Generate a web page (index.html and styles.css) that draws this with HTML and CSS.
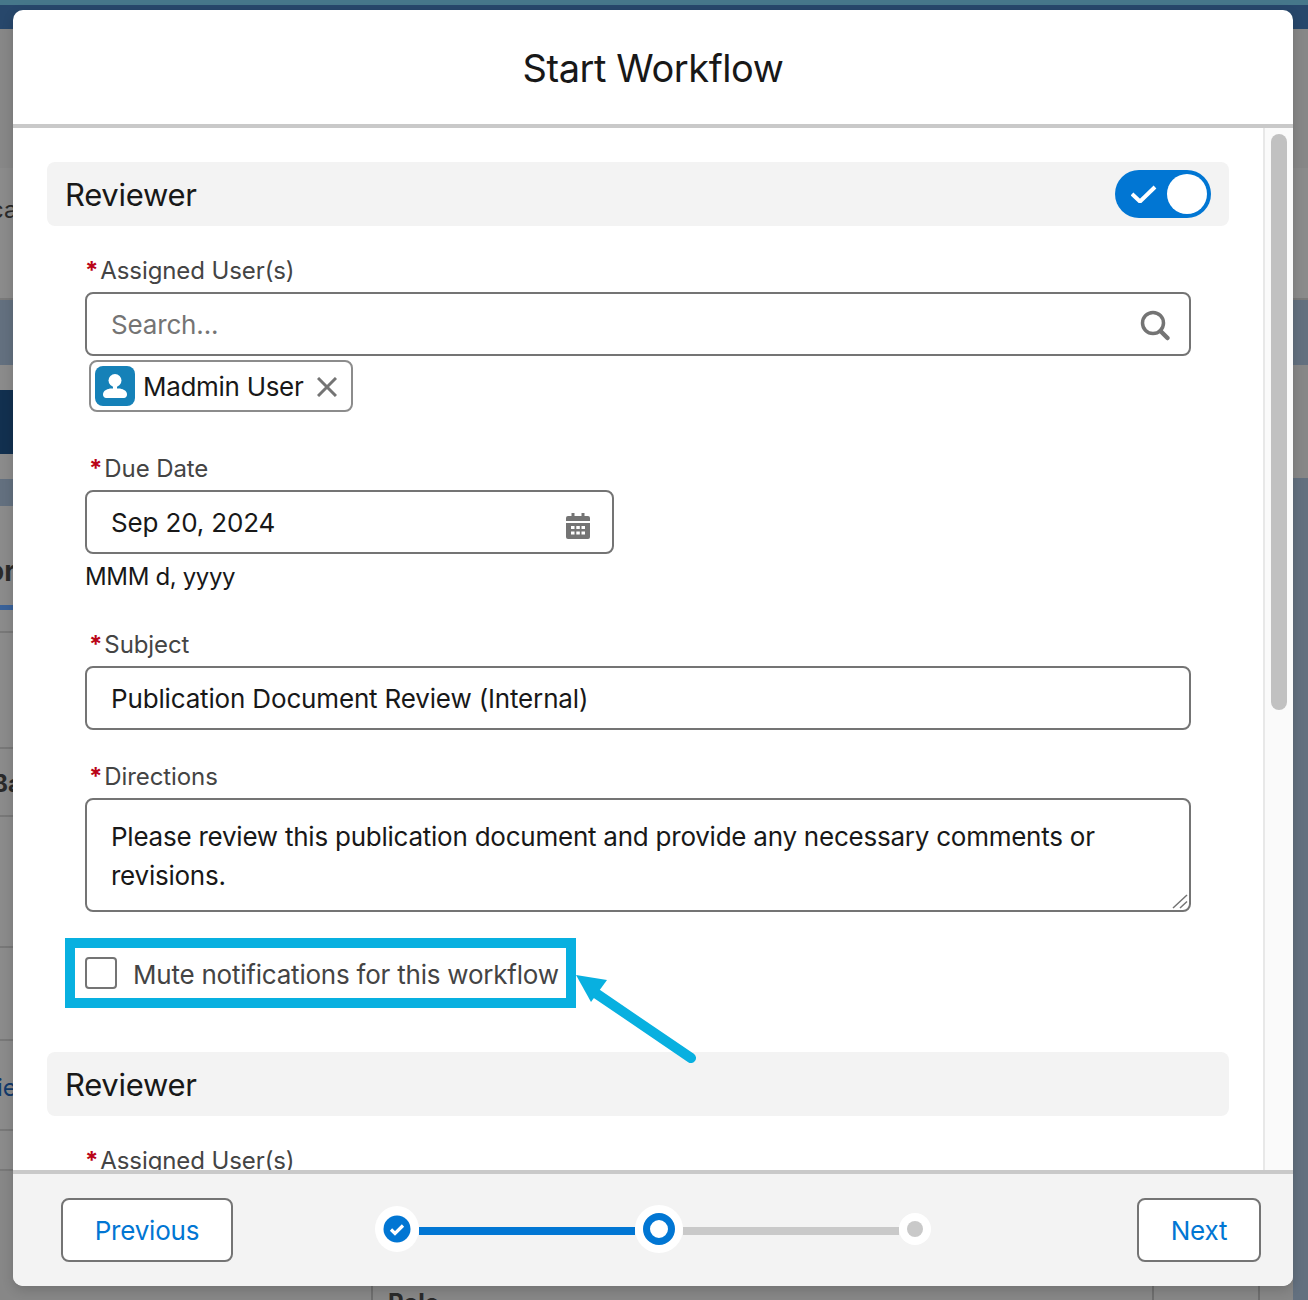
FILE: index.html
```html
<!DOCTYPE html>
<html lang="en">
<head>
  <meta charset="UTF-8">
  <title>Start Workflow</title>
  <link rel="stylesheet" href="styles.css">
</head>
<body>
  <div class="backdrop">
    <div class="band band-teal"></div>
    <div class="band band-navy"></div>
    <div class="band band-grey-a"></div>
    <div class="band band-grey-b"><span class="frag frag-ca">ca</span></div>
    <div class="band band-slate"></div>
    <div class="band band-gap"></div>
    <div class="band band-dark"></div>
    <div class="band band-gap"></div>
    <div class="band band-slate2"></div>
    <div class="band band-or"><span class="frag frag-or">or</span></div>
    <div class="band band-tab"></div>
    <div class="band band-row r1"></div>
    <div class="band band-row r2"></div>
    <div class="band band-row r3"><span class="frag frag-ba">Ba</span></div>
    <div class="band band-row r4"></div>
    <div class="band band-row r5"></div>
    <div class="band band-row r6"><span class="frag frag-ie">ie</span></div>
    <div class="band band-row r7"></div>
    <div class="band-foot">
      <div class="foot-cell cell-first"></div>
      <div class="foot-cell cell-role">Role</div>
      <div class="foot-cell cell-third"></div>
      <div class="foot-cell cell-last"></div>
    </div>
  </div>
  <div class="backdrop-right">
    <div class="right-slate"></div>
    <div class="right-grey"></div>
    <div class="right-rest"></div>
  </div>

  <div class="modal">
    <header class="modal-head">
      <h1>Start Workflow</h1>
    </header>

    <div class="modal-body">
      <div class="content">
        <div class="section-head">
          <h2>Reviewer</h2>
          <div class="toggle">
            <svg class="toggle-check" width="26" height="18" viewBox="0 0 26 18"><path d="M1 9l8 7.500L24 2" fill="none" stroke="#fff" stroke-width="4"/></svg>
            <span class="toggle-knob"></span>
          </div>
        </div>

        <div class="fields">
          <label class="field-label"><span class="req">*</span>Assigned User(s)</label>
          <div class="input-wrap">
            <input class="text-input" type="text" placeholder="Search...">
            <svg class="input-icon icon-search" width="32" height="32" viewBox="0 0 32 32"><circle cx="14" cy="13" r="10.500" fill="none" stroke="#747474" stroke-width="3.500"/><path d="M21.500 21l7 7" stroke="#747474" stroke-width="4.500" stroke-linecap="round"/></svg>
          </div>
          <div class="pill">
            <span class="avatar">
              <svg width="40" height="40" viewBox="0 0 40 40"><circle cx="20" cy="14.500" r="6.500" fill="#fff" /><rect x="18" y="16" width="4" height="8" fill="#fff"/><path d="M8 28.500c0-3.500 3-5 7-6h10c4 1 7 2.500 7 6 0 2-1.500 3.500-3 3.500H11c-1.500 0-3-1.500-3-3.500z" fill="#fff"/></svg>
            </span>
            <span class="pill-name">Madmin User</span>
            <svg class="pill-x" width="20" height="20" viewBox="0 0 20 20"><path d="M1 1l18 18M19 1L1 19" stroke="#747474" stroke-width="3"/></svg>
          </div>

          <label class="field-label label-inset label-date"><span class="req">*</span>Due Date</label>
          <div class="input-wrap date-wrap">
            <input class="text-input" type="text" value="Sep 20, 2024">
            <svg class="input-icon icon-cal" width="24" height="26" viewBox="0 0 24 26">
              <path d="M0 5a2 2 0 0 1 2-2h3.500V0h3v3h7V0h3v3H22a2 2 0 0 1 2 2v3H0z" fill="#747474"/>
              <path d="M0 10h24v14a2 2 0 0 1-2 2H2a2 2 0 0 1-2-2z" fill="#747474"/>
              <g fill="#fff"><rect x="5" y="13" width="3.500" height="3"/><rect x="10.300" y="13" width="3.500" height="3"/><rect x="15.500" y="13" width="3.500" height="3"/><rect x="5" y="18.500" width="3.500" height="3"/><rect x="10.300" y="18.500" width="3.500" height="3"/><rect x="15.500" y="18.500" width="3.500" height="3"/></g>
            </svg>
          </div>
          <div class="date-hint">MMM d, yyyy</div>

          <label class="field-label label-inset label-subject"><span class="req">*</span>Subject</label>
          <input class="text-input" type="text" value="Publication Document Review (Internal)">

          <label class="field-label label-inset label-dir"><span class="req">*</span>Directions</label>
          <div class="input-wrap">
            <textarea class="text-area">Please review this publication document and provide any necessary comments or revisions.</textarea>
            <svg class="input-icon icon-grip" width="16" height="15" viewBox="0 0 16 15"><path d="M1 14L15 1M8 14l7-6.500" stroke="#747474" stroke-width="1.500" fill="none"/></svg>
          </div>
        </div>

        <div class="mute-box">
          <input class="mute-check" type="checkbox" id="mute">
          <label class="mute-label" for="mute">Mute notifications for this workflow</label>
        </div>

        <div class="section-head second">
          <h2>Reviewer</h2>
        </div>
        <div class="fields">
          <label class="field-label"><span class="req">*</span>Assigned User(s)</label>
        </div>
      </div>
      <div class="scroll-track"><div class="scroll-thumb"></div></div>
    </div>

    <footer class="modal-foot">
      <button class="btn">Previous</button>
      <div class="progress">
        <span class="step step-done">
          <svg width="28" height="28" viewBox="0 0 28 28"><circle cx="14" cy="14" r="13.500" fill="#0176d3"/><path d="M8 14.500l4 4 8-8" fill="none" stroke="#fff" stroke-width="3.200"/></svg>
        </span>
        <span class="bar bar-on"></span>
        <span class="step step-now"><span class="ring"></span></span>
        <span class="bar"></span>
        <span class="step step-todo"><span class="dot"></span></span>
      </div>
      <button class="btn btn-next">Next</button>
    </footer>
  </div>

  <svg class="arrow" width="130" height="100" viewBox="0 0 130 100">
    <path d="M18 18L115 84" stroke="#08b0e0" stroke-width="10" stroke-linecap="round"/>
    <path d="M0 1L31 6L15 28z" fill="#08b0e0"/>
  </svg>
</body>
</html>
```

FILE: styles.css
```css
* {
  box-sizing: border-box;
}
html, body {
  margin: 0;
  height: 1300px;
  overflow: hidden;
}
body {
  font-family: Inter, "Liberation Sans", sans-serif;
  color: #181818;
  position: relative;
  background: #888;
}

/* page behind the modal */
.backdrop {
  display: flex;
  flex-direction: column;
  height: 1300px;
  overflow: hidden;
}
.band {
  flex: none;
  overflow: hidden;
  white-space: nowrap;
  border-bottom: 2px solid transparent;
}
.band-teal { height: 5px; background: #46778a; border: 0; }
.band-navy { height: 24px; background: #27476b; border: 0; }
.band-grey-a { height: 139px; background: #878787; border: 0; }
.band-grey-b { height: 132px; background: #8b8b8b; border-bottom-color: #7a7a7a; }
.band-slate { height: 65px; background: #63707f; border: 0; }
.band-gap { height: 25px; background: #8b8b8b; border: 0; }
.band-dark { height: 64px; background: #12304f; border: 0; }
.band-slate2 { height: 27px; background: #63707f; border: 0; }
.band-or { height: 99px; background: #8b8b8b; border: 0; }
.band-tab { height: 5px; background: #3a6299; border: 0; }
.band-row { background: #8b8b8b; border-bottom-color: #787878; }
.r1 { height: 23px; }
.r2 { height: 116px; }
.r3 { height: 68px; }
.r4 { height: 131px; }
.r5 { height: 93px; }
.r6 { height: 90px; }
.r7 { height: 40px; }
.band-foot {
  flex: 1;
  background: #878787;
  display: flex;
}
.foot-cell {
  flex: none;
  border-left: 2px solid #6e6e6e;
}
.cell-first { width: 371px; border: 0; }
.cell-role {
  width: 781px;
  padding: 117px 0 0 15px;
  font-size: 24px;
  font-weight: 700;
  color: #2a2a2a;
}
.cell-third { width: 106px; }
.cell-last { flex: 1; }
.frag {
  display: block;
  font-size: 24px;
  color: #2a2a2a;
}
.frag-ca { margin-left: -10px; padding-top: 27px; }
.frag-or { margin-left: -13px; padding-top: 48px; font-size: 28px; font-weight: 700; }
.frag-ba { margin-left: -8px; padding-top: 20px; font-weight: 700; }
.frag-ie { margin-left: -3px; padding-top: 32px; color: #123a6b; }

.backdrop-right {
  position: absolute;
  right: 0;
  top: 300px;
  bottom: 0;
  width: 15px;
  display: flex;
  flex-direction: column;
}
.right-slate { height: 65px; background: #63707f; }
.right-grey { height: 113px; background: #878787; }
.right-rest { flex: 1; background: #63707f; }

/* modal */
.modal {
  position: absolute;
  left: 13px;
  top: 10px;
  width: 1280px;
  height: 1276px;
  display: flex;
  flex-direction: column;
  border-radius: 10px;
  background: #fff;
  overflow: hidden;
  box-shadow: 0 4px 12px rgba(0, 0, 0, 0.16);
}
.modal-head {
  flex: none;
  height: 118px;
  border-bottom: 4px solid #c9c9c9;
  display: flex;
  align-items: center;
  justify-content: center;
}
h1 {
  margin: 2px 0 0;
  font-size: 38px;
  font-weight: 400;
  line-height: 48px;
  letter-spacing: -0.43px;
}
.modal-body {
  flex: 1;
  min-height: 0;
  display: flex;
}
.content {
  flex: 1;
  min-width: 0;
  overflow: hidden;
  padding: 34px 34px 0;
}
.scroll-track {
  flex: none;
  width: 30px;
  background: #fafafa;
  border-left: 2px solid #e8e8e8;
  padding: 6px 6px 0 6px;
}
.scroll-thumb {
  width: 16px;
  height: 576px;
  background: #c1c1c1;
  border-radius: 8px;
}

.section-head {
  height: 64px;
  background: #f3f3f3;
  border-radius: 8px;
  padding: 0 18px;
  display: flex;
  align-items: center;
  justify-content: space-between;
}
.section-head.second {
  margin-top: 44px;
}
h2 {
  margin: 2px 0 0;
  font-size: 31px;
  font-weight: 400;
  line-height: 40px;
  letter-spacing: -0.3px;
}
.toggle {
  width: 96px;
  height: 48px;
  background: #0176d3;
  border-radius: 24px;
  display: flex;
  align-items: center;
  justify-content: space-between;
  padding: 0 4px 0 16px;
}
.toggle-knob {
  width: 40px;
  height: 40px;
  border-radius: 50%;
  background: #fff;
}

.fields {
  padding: 0 38px;
}
.field-label {
  display: block;
  font-size: 24px;
  line-height: 32px;
  color: #444;
  margin-top: 29px;
  margin-bottom: 5px;
  letter-spacing: -0.1px;
}
.req {
  color: #ba0517;
  font-weight: 700;
  margin: 0 2px 0 0;
}
.label-inset {
  padding-left: 4px;
}
.input-wrap {
  position: relative;
}
.date-wrap {
  width: 529px;
}
.text-input {
  display: block;
  width: 100%;
  height: 64px;
  border: 2px solid #747474;
  border-radius: 8px;
  padding: 0 24px;
  font: 26px Inter, "Liberation Sans", sans-serif;
  letter-spacing: -0.16px;
  color: #181818;
  background: #fff;
  outline: none;
}
.text-input::placeholder {
  color: #747474;
  opacity: 1;
}
.input-icon {
  position: absolute;
}
.icon-search { right: 20px; top: 18px; }
.icon-cal { right: 24px; top: 23px; }
.icon-grip { right: 3px; bottom: 3px; }

.pill {
  margin: 4px 0 0 4px;
  width: 264px;
  height: 52px;
  border: 2px solid #8c8c8c;
  border-radius: 8px;
  display: flex;
  align-items: center;
  padding-left: 4px;
}
.avatar {
  width: 40px;
  height: 40px;
  background: #1581b8;
  border-radius: 8px;
  display: block;
  flex: none;
}
.avatar svg {
  display: block;
}
.pill-name {
  font-size: 26px;
  letter-spacing: -0.3px;
  margin-left: 8px;
  padding-top: 1px;
}
.pill-x {
  margin-left: 14px;
  margin-top: 2px;
}
.label-date { margin-top: 41px; }
.date-hint {
  font-size: 24px;
  line-height: 32px;
  letter-spacing: -0.35px;
  margin-top: 7px;
}
.label-subject { margin-top: 36px; }
.label-dir { margin-top: 31px; }
.text-area {
  display: block;
  width: 100%;
  height: 114px;
  border: 2px solid #747474;
  border-radius: 8px;
  padding: 17px 24px 0;
  font: 26px/39px Inter, "Liberation Sans", sans-serif;
  letter-spacing: -0.24px;
  color: #181818;
  background: #fff;
  outline: none;
  resize: none;
}

.mute-box {
  margin: 26px 0 0 18px;
  width: 511px;
  height: 70px;
  border: 10px solid #08b0e0;
  display: flex;
  align-items: center;
  padding-left: 10px;
}
.mute-check {
  appearance: none;
  width: 32px;
  height: 32px;
  margin: 0;
  flex: none;
  background: #fff;
  border: 2px solid #747474;
  border-radius: 4px;
}
.mute-label {
  font-size: 26px;
  letter-spacing: -0.22px;
  color: #444;
  margin-left: 16px;
  padding-top: 3px;
  white-space: nowrap;
}

/* footer */
.modal-foot {
  flex: none;
  height: 116px;
  background: #f3f3f3;
  border-top: 4px solid #c9c9c9;
  display: flex;
  align-items: center;
  padding: 0 32px 0 48px;
}
.btn {
  width: 172px;
  height: 64px;
  background: #fff;
  border: 2px solid #747474;
  border-radius: 8px;
  color: #0176d3;
  font: 26px Inter, "Liberation Sans", sans-serif;
  letter-spacing: -0.2px;
}
.btn-next {
  width: 124px;
  margin-left: auto;
}
.progress {
  display: flex;
  align-items: center;
  margin-left: 142px;
  margin-bottom: 2px;
}
.bar {
  width: 216px;
  height: 8px;
  margin-top: 4px;
  background: #c9c9c9;
}
.bar-on {
  background: #0176d3;
}
.step {
  display: flex;
  align-items: center;
  justify-content: center;
  background: #fff;
  border-radius: 50%;
}
.step-done { width: 44px; height: 46px; }
.step-now { width: 48px; height: 48px; }
.step-todo { width: 32px; height: 32px; }
.ring {
  width: 32px;
  height: 32px;
  border-radius: 50%;
  background: #fff;
  border: 7px solid #0176d3;
}
.dot {
  width: 16px;
  height: 16px;
  border-radius: 50%;
  background: #c9c9c9;
}

/* callout arrow sits on top of the modal */
.arrow {
  position: absolute;
  left: 576px;
  top: 974px;
}
```
